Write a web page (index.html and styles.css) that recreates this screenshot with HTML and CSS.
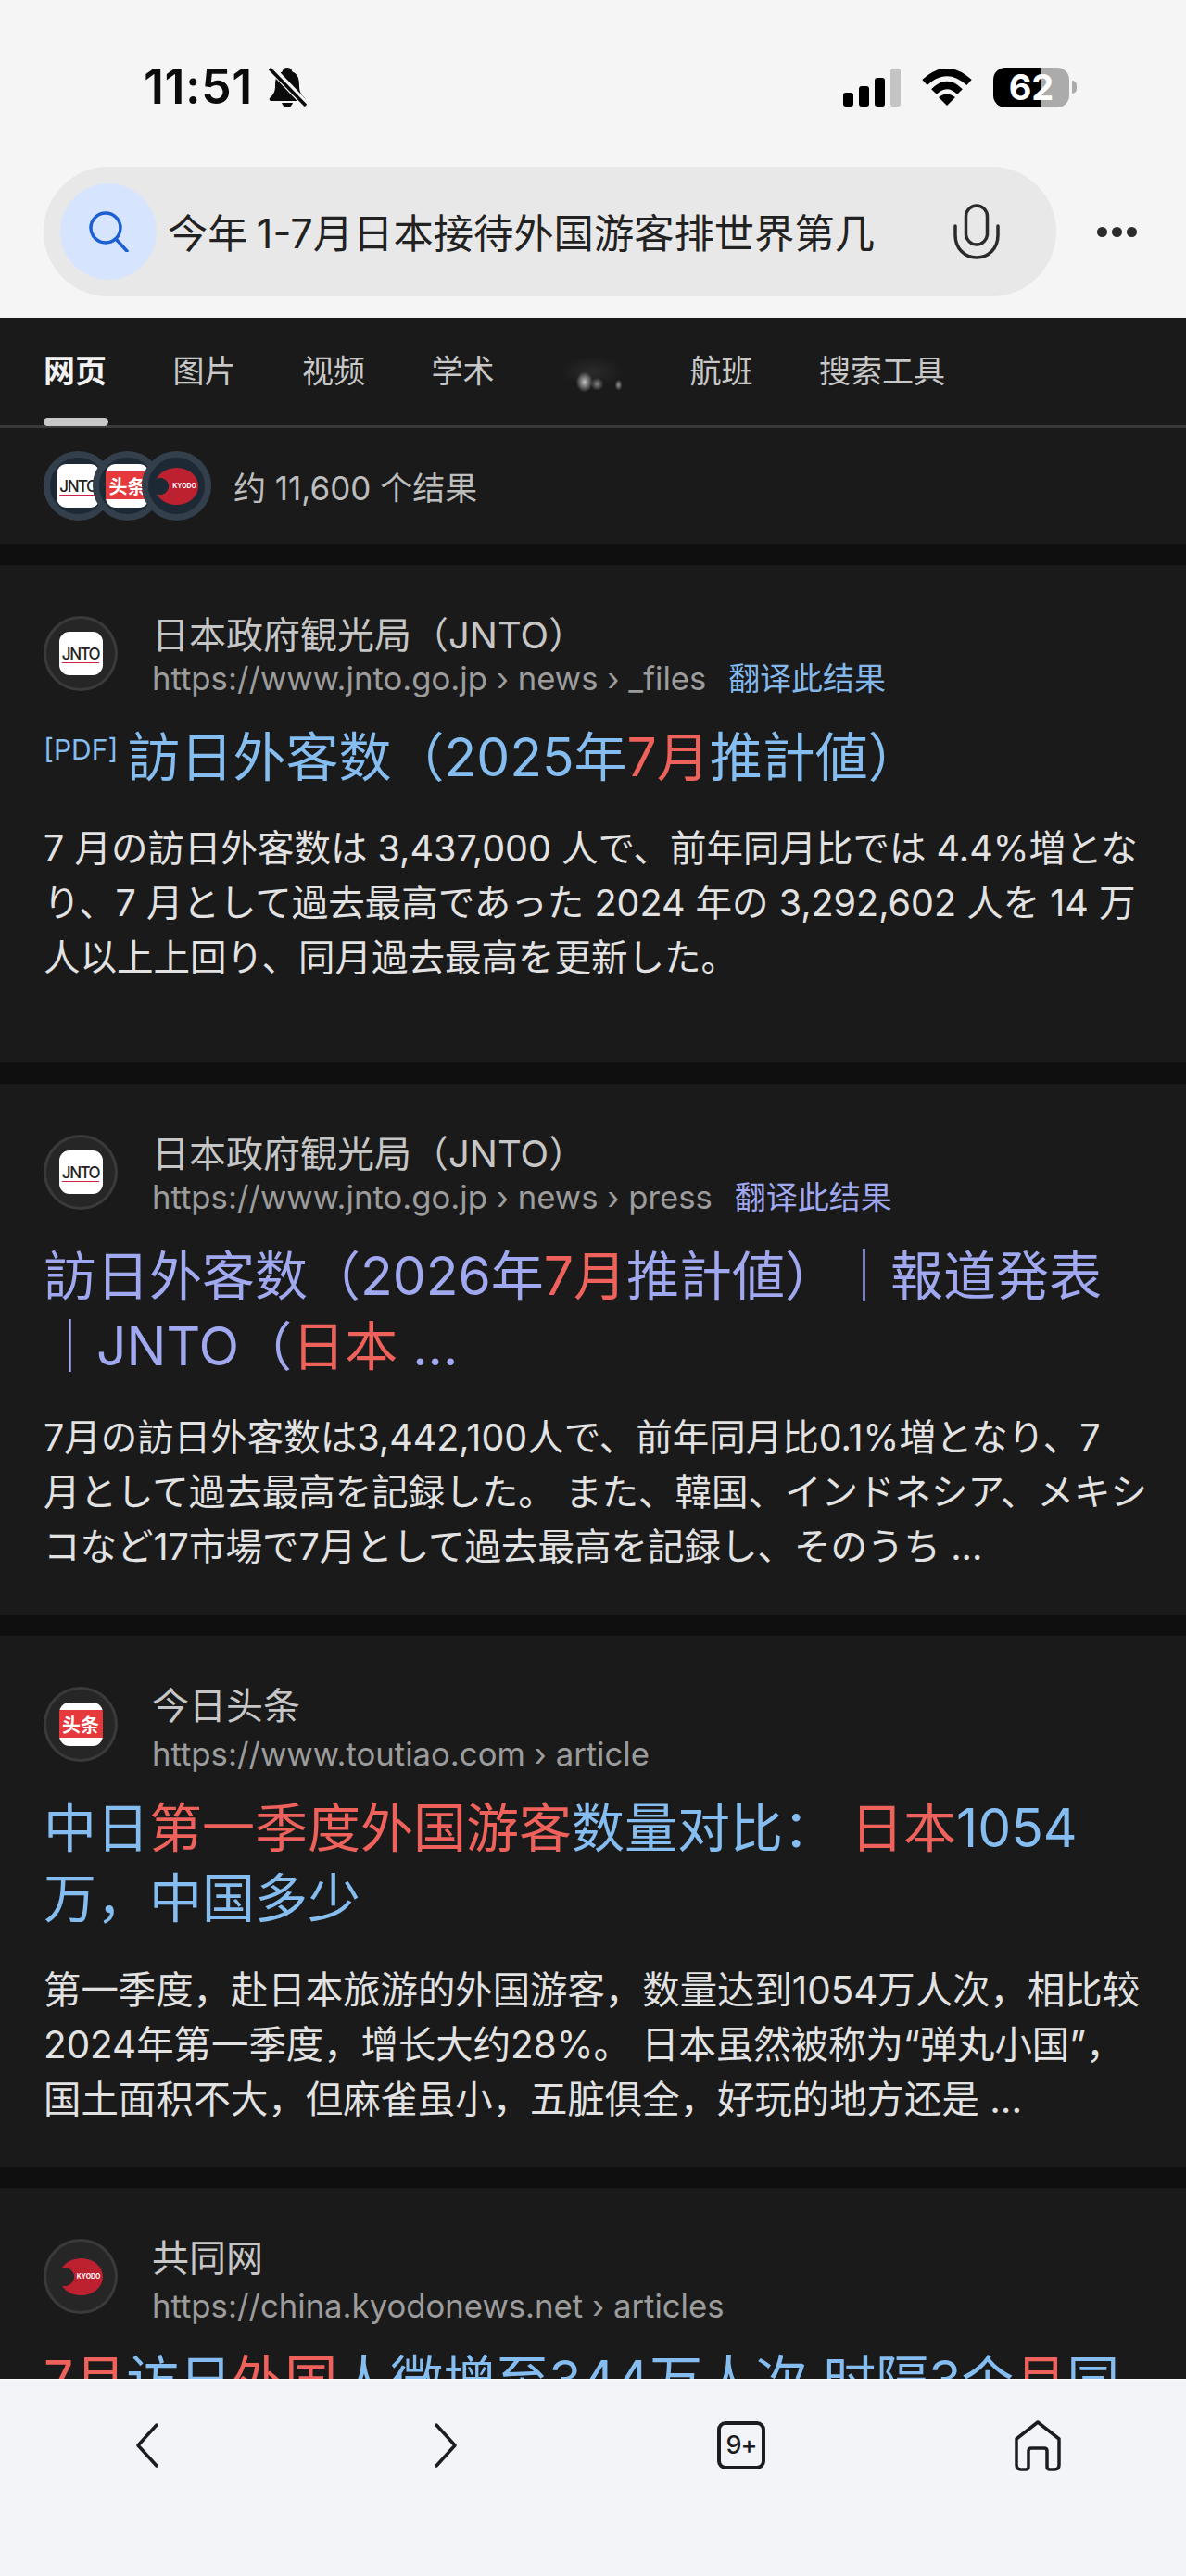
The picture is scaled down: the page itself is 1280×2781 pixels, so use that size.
FILE: index.html
```html
<!DOCTYPE html>
<html lang="zh-CN">
<head>
    <meta charset="UTF-8">
    <meta name="viewport" content="width=device-width, initial-scale=1.0">
    <title>今年1-7月日本接待外国游客排世界第几</title>
    <link rel="stylesheet" href="styles.css">
</head>
<body>
    <header class="top-bar">
        <div class="status-bar">
            <div class="status-left">
                <span class="clock">11:51</span>
                <svg class="bell" viewBox="0 0 42 44">
                    <path d="M21 1c3 0 5 2 5.500 4.500C33 8 34 14 34 21c0 6 2 9 6 13 1 1.500 0 3-2 3H4c-2 0-3-1.500-2-3 4-4 6-7 6-13 0-7 1-13 7.500-15.500C16 3 18 1 21 1z" fill="#0b0b0b"/>
                    <path d="M15 39h12c-1 3-3 5-6 5s-5-2-6-5z" fill="#0b0b0b"/>
                    <path d="M2 0L42 42" stroke="#f5f5f5" stroke-width="8"/>
                    <path d="M2 2L41 42" stroke="#0b0b0b" stroke-width="3.500"/>
                </svg>
            </div>
            <div class="status-right">
                <div class="signal">
                    <span class="bar bar-1"></span>
                    <span class="bar bar-2"></span>
                    <span class="bar bar-3"></span>
                    <span class="bar bar-4"></span>
                </div>
                <svg class="wifi" viewBox="0 0 56 40">
                    <path d="M4 15Q28 -7 52 15" fill="none" stroke="#000" stroke-width="8"/>
                    <path d="M14 25Q28 11 42 25" fill="none" stroke="#000" stroke-width="8"/>
                    <path d="M19 31Q28 24 37 31L28 40z" fill="#000"/>
                </svg>
                <div class="battery">62</div>
                <span class="battery-nub"></span>
            </div>
        </div>
        <div class="search-row">
            <div class="search-box">
                <span class="search-icon">
                    <svg viewBox="0 0 44 44" width="44" height="44">
                        <circle cx="19" cy="18" r="16" fill="none" stroke="#1b5fd2" stroke-width="3.500"/>
                        <path d="M30 30L42 43" stroke="#1b5fd2" stroke-width="3.500" stroke-linecap="round"/>
                    </svg>
                </span>
                <span class="search-text">今年 1-7月日本接待外国游客排世界第几</span>
                <svg class="mic" viewBox="0 0 52 60">
                    <rect x="14.500" y="2" width="23" height="42" rx="11.500" fill="none" stroke="#2b2b2b" stroke-width="3.500"/>
                    <path d="M3 24v10c0 14 10 24 23 24s23-10 23-24V24" fill="none" stroke="#2b2b2b" stroke-width="3.500" stroke-linecap="round"/>
                </svg>
            </div>
            <div class="more-dots"><span></span><span></span><span></span></div>
        </div>
    </header>

    <main class="results">
        <nav class="tabs">
            <a class="tab tab-active">网页</a>
            <a class="tab">图片</a>
            <a class="tab">视频</a>
            <a class="tab">学术</a>
            <a class="tab tab-blurred"><span class="smudge"></span></a>
            <a class="tab">航班</a>
            <a class="tab">搜索工具</a>
        </nav>

        <div class="summary">
            <div class="avatars">
                <span class="avatar"><span class="logo logo-jnto">JNTO</span></span>
                <span class="avatar"><span class="logo logo-toutiao">头条</span></span>
                <span class="avatar"><span class="logo logo-kyodo">KYODO</span></span>
            </div>
            <span class="summary-text">约 11,600 个结果</span>
        </div>

        <article class="card card-tall ja">
            <div class="site">
                <span class="favicon"><span class="logo logo-jnto">JNTO</span></span>
                <div class="site-info">
                    <div class="site-name">日本政府観光局（JNTO）</div>
                    <div class="site-url">https://www.jnto.go.jp › news › _files <a class="translate">翻译此结果</a></div>
                </div>
            </div>
            <h2 class="title"><span class="pdf">[PDF]</span>訪日外客数（2025年<em>7月</em>推計値）</h2>
            <p class="snippet">7 月の訪日外客数は 3,437,000 人で、前年同月比では 4.4%増とな<br>り、7 月として過去最高であった 2024 年の 3,292,602 人を 14 万<br>人以上上回り、同月過去最高を更新した。</p>
        </article>

        <article class="card ja">
            <div class="site">
                <span class="favicon"><span class="logo logo-jnto">JNTO</span></span>
                <div class="site-info">
                    <div class="site-name">日本政府観光局（JNTO）</div>
                    <div class="site-url">https://www.jnto.go.jp › news › press <a class="translate translate-visited">翻译此结果</a></div>
                </div>
            </div>
            <h2 class="title title-visited">訪日外客数（2026年<em>7月</em>推計値）｜報道発表<br>｜JNTO（<em>日本</em> ...</h2>
            <p class="snippet">7月の訪日外客数は3,442,100人で、前年同月比0.1%増となり、7<br>月として過去最高を記録した。 また、韓国、インドネシア、メキシ<br>コなど17市場で7月として過去最高を記録し、そのうち ...</p>
        </article>

        <article class="card">
            <div class="site">
                <span class="favicon"><span class="logo logo-toutiao">头条</span></span>
                <div class="site-info site-info-plain">
                    <div class="site-name">今日头条</div>
                    <div class="site-url">https://www.toutiao.com › article</div>
                </div>
            </div>
            <h2 class="title">中日<em>第一季度外国游客</em>数量对比： <em>日本</em>1054<br>万，中国多少</h2>
            <p class="snippet">第一季度，赴日本旅游的外国游客，数量达到1054万人次，相比较<br>2024年第一季度，增长大约28%。 日本虽然被称为“弹丸小国”，<br>国土面积不大，但麻雀虽小，五脏俱全，好玩的地方还是 ...</p>
        </article>

        <article class="card">
            <div class="site">
                <span class="favicon"><span class="logo logo-kyodo">KYODO</span></span>
                <div class="site-info site-info-plain">
                    <div class="site-name">共同网</div>
                    <div class="site-url">https://china.kyodonews.net › articles</div>
                </div>
            </div>
            <h2 class="title"><em>7月</em>访日<em>外国</em>人微增至344万人次 时隔3个<em>月</em>同</h2>
        </article>
    </main>

    <footer class="bottom-nav">
        <svg class="nav-back" viewBox="0 0 26 48" width="26" height="48">
            <path d="M24 2L4 24l20 22" fill="none" stroke="#1c1c20" stroke-width="3.500" stroke-linecap="round" stroke-linejoin="round"/>
        </svg>
        <svg class="nav-forward" viewBox="0 0 26 48" width="26" height="48">
            <path d="M2 2l20 22L2 46" fill="none" stroke="#1c1c20" stroke-width="3.500" stroke-linecap="round" stroke-linejoin="round"/>
        </svg>
        <div class="nav-tabs">9+</div>
        <svg class="nav-home" viewBox="0 0 52 56" width="52" height="56">
            <path d="M3 49V21L26 3l23 18v28q0 5-5 5h-5q-3 0-3-3V34q0-3-3-3H19q-3 0-3 3v17q0 3-3 3H8q-5 0-5-5z" fill="none" stroke="#1c1c20" stroke-width="3.500" stroke-linejoin="round"/>
        </svg>
    </footer>
</body>
</html>
```

FILE: styles.css
```css
* {
    box-sizing: border-box;
}

html, body {
    margin: 0;
    padding: 0;
}

body {
    display: flex;
    flex-direction: column;
    width: 1280px;
    height: 2781px;
    overflow: hidden;
    font-family: Inter, "Noto Sans CJK SC", sans-serif;
    background-color: #f5f5f5;
}

/* top bar */
.top-bar {
    height: 343px;
    flex: none;
    background-color: #f5f5f5;
    padding-top: 72px;
}

.status-bar {
    display: flex;
    justify-content: space-between;
    height: 44px;
    padding: 0 118px 0 155px;
    margin-bottom: 64px;
}

.status-left {
    display: flex;
    align-items: center;
    gap: 16px;
}

.clock {
    font-size: 52px;
    line-height: 44px;
    font-weight: 600;
    color: #0b0b0b;
    letter-spacing: 0.500px;
}

.bell {
    width: 42px;
    height: 44px;
}

.status-right {
    display: flex;
    align-items: center;
}

.signal {
    display: flex;
    align-items: flex-end;
    gap: 6px;
    height: 41px;
    margin-right: 22px;
}

.bar {
    width: 11px;
    border-radius: 3px;
    background-color: #000;
}

.bar-1 { height: 15px; }
.bar-2 { height: 22px; }
.bar-3 { height: 31px; }
.bar-4 { height: 41px; background-color: #c4c4c4; }

.wifi {
    width: 56px;
    height: 40px;
    margin-right: 22px;
}

.battery {
    width: 82px;
    height: 43px;
    border-radius: 13px;
    background: linear-gradient(90deg, #000 62%, #ababab 62%);
    color: #fff;
    font-size: 38px;
    line-height: 43px;
    font-weight: 700;
    text-align: center;
}

.battery-nub {
    width: 5px;
    height: 14px;
    margin-left: 3px;
    border-radius: 0 5px 5px 0;
    background-color: #ababab;
}

.search-row {
    display: flex;
    align-items: center;
    padding-left: 47px;
}

.search-box {
    display: flex;
    align-items: center;
    width: 1093px;
    height: 140px;
    padding: 0 60px 0 18px;
    border-radius: 70px;
    background-color: #e8e8e8;
}

.search-icon {
    display: flex;
    align-items: center;
    justify-content: center;
    width: 104px;
    height: 104px;
    flex: none;
    border-radius: 50%;
    background-color: #d6e5fd;
}

.search-text {
    flex: 1;
    margin: 0 0 3px 12px;
    font-size: 43.300px;
    word-spacing: -3px;
    color: #222;
    white-space: nowrap;
}

.mic {
    width: 52px;
    height: 60px;
    flex: none;
}

.more-dots {
    display: flex;
    gap: 5px;
    margin-left: 44px;
}

.more-dots span {
    width: 11px;
    height: 11px;
    border-radius: 50%;
    background-color: #2b2b2b;
}

/* results */
.results {
    flex: 1;
    min-height: 0;
    overflow: hidden;
    background-color: #0f0f0f;
}

.tabs {
    display: flex;
    gap: 71.500px;
    height: 119px;
    padding: 35px 47px 0;
    background-color: #1a1a1a;
    border-bottom: 3px solid #3a3a3a;
}

.tab {
    position: relative;
    font-size: 34px;
    line-height: 46px;
    color: #c8c8c8;
    white-space: nowrap;
}

.tab-active {
    font-weight: 700;
    color: #f2f2f2;
}

.tab-active::after {
    content: "";
    position: absolute;
    left: 0;
    top: 73px;
    width: 70px;
    height: 9px;
    border-radius: 5px;
    background-color: #c8c8c8;
}

.tab-blurred {
    width: 68px;
}

.smudge {
    display: block;
    width: 68px;
    height: 46px;
    background:
        radial-gradient(ellipse 9px 11px at 38% 75%, rgba(225, 225, 225, 0.85), transparent),
        radial-gradient(ellipse 7px 7px at 58% 80%, rgba(200, 200, 200, 0.6), transparent),
        radial-gradient(ellipse 4px 6px at 92% 82%, rgba(200, 200, 200, 0.7), transparent),
        radial-gradient(ellipse 34px 16px at 50% 50%, rgba(60, 60, 60, 0.5), transparent);
}

.summary {
    display: flex;
    align-items: center;
    gap: 24px;
    height: 125px;
    padding: 0 47px;
    background-color: #1a1a1a;
}

.avatars {
    display: flex;
}

.avatar {
    display: flex;
    align-items: center;
    justify-content: center;
    width: 75px;
    height: 75px;
    border: 7px solid #333f4a;
    border-radius: 50%;
    background-color: #1d2a36;
}

.avatar + .avatar {
    margin-left: -22px;
}

.summary-text {
    font-size: 35px;
    color: #bdbdbd;
}

.logo {
    display: flex;
    align-items: center;
    justify-content: center;
    width: 47px;
    height: 47px;
    flex: none;
    border-radius: 11px;
    overflow: hidden;
    white-space: nowrap;
}

.logo-jnto {
    background-color: #fff;
    color: #222;
    font-size: 17px;
    font-weight: 500;
    letter-spacing: -1.500px;
    text-decoration: underline #d0223c 1px;
    text-underline-offset: 3px;
}

.logo-toutiao {
    background: linear-gradient(180deg, #fff 8px, #e5393c 8px, #e5393c 38px, #fff 38px);
    color: #fff;
    font-size: 20px;
    font-weight: 700;
}

.logo-kyodo {
    border-radius: 50%;
    height: 40px;
    background: radial-gradient(circle 10px at 6px 50%, #262626 98%, #bd202f 100%);
    color: #fff;
    font-size: 7px;
    font-weight: 700;
    justify-content: flex-end;
    padding-right: 2px;
}

.avatar .logo-kyodo {
    background: radial-gradient(circle 9px at 6px 50%, #1d2a36 98%, #bd202f 100%);
}

.card {
    margin-top: 23px;
    padding: 55px 47px 43px;
    background-color: #1a1a1a;
}

.card-tall {
    padding-bottom: 83px;
}

.ja {
    font-family: Inter, "Noto Sans CJK JP", sans-serif;
}

.site {
    display: flex;
    gap: 37px;
    height: 81px;
}

.favicon {
    display: flex;
    align-items: center;
    justify-content: center;
    width: 80px;
    height: 81px;
    flex: none;
    border: 3px solid #3a3a3a;
    border-radius: 50%;
    background-color: #262626;
}

.site-info {
    display: flex;
    flex-direction: column;
    gap: 4px;
}

.site-info-plain {
    gap: 9px;
}

.site-name {
    font-size: 40px;
    line-height: 42px;
    color: #c6c6c6;
    white-space: nowrap;
}

.site-url {
    font-size: 34.700px;
    line-height: 42px;
    color: #9c9c9c;
    white-space: nowrap;
}

.translate {
    margin-left: 14px;
    font-size: 34px;
    color: #84b8ea;
}

.translate-visited {
    color: #a0a8f0;
}

.title {
    margin: 34px 0 0;
    font-size: 57px;
    line-height: 76px;
    font-weight: 400;
    color: #85bdf0;
    white-space: nowrap;
}

.title em {
    font-style: normal;
    color: #ef625c;
}

.title-visited {
    color: #a0a8f0;
}

.pdf {
    margin-right: 10px;
    font-size: 30px;
    line-height: 0;
    vertical-align: 18px;
}

.snippet {
    margin: 31px 0 0;
    font-size: 40.400px;
    line-height: 59px;
    color: #e2e2e2;
    white-space: nowrap;
}

.ja .snippet {
    font-size: 39.500px;
}

/* bottom navigation */
.bottom-nav {
    display: grid;
    grid-template-columns: repeat(4, 320px);
    justify-items: center;
    align-items: center;
    height: 213px;
    flex: none;
    padding-bottom: 70px;
    background-color: #f3f4f8;
    border-top: 1px solid #fff;
}

.nav-back {
    margin-right: 5px;
}

.nav-forward {
    margin-left: 4px;
}

.nav-tabs {
    width: 52px;
    height: 52px;
    border: 4px solid #1c1c20;
    border-radius: 9px;
    font-size: 27px;
    line-height: 44px;
    font-weight: 500;
    letter-spacing: -1px;
    text-align: center;
    color: #1c1c20;
}
```
